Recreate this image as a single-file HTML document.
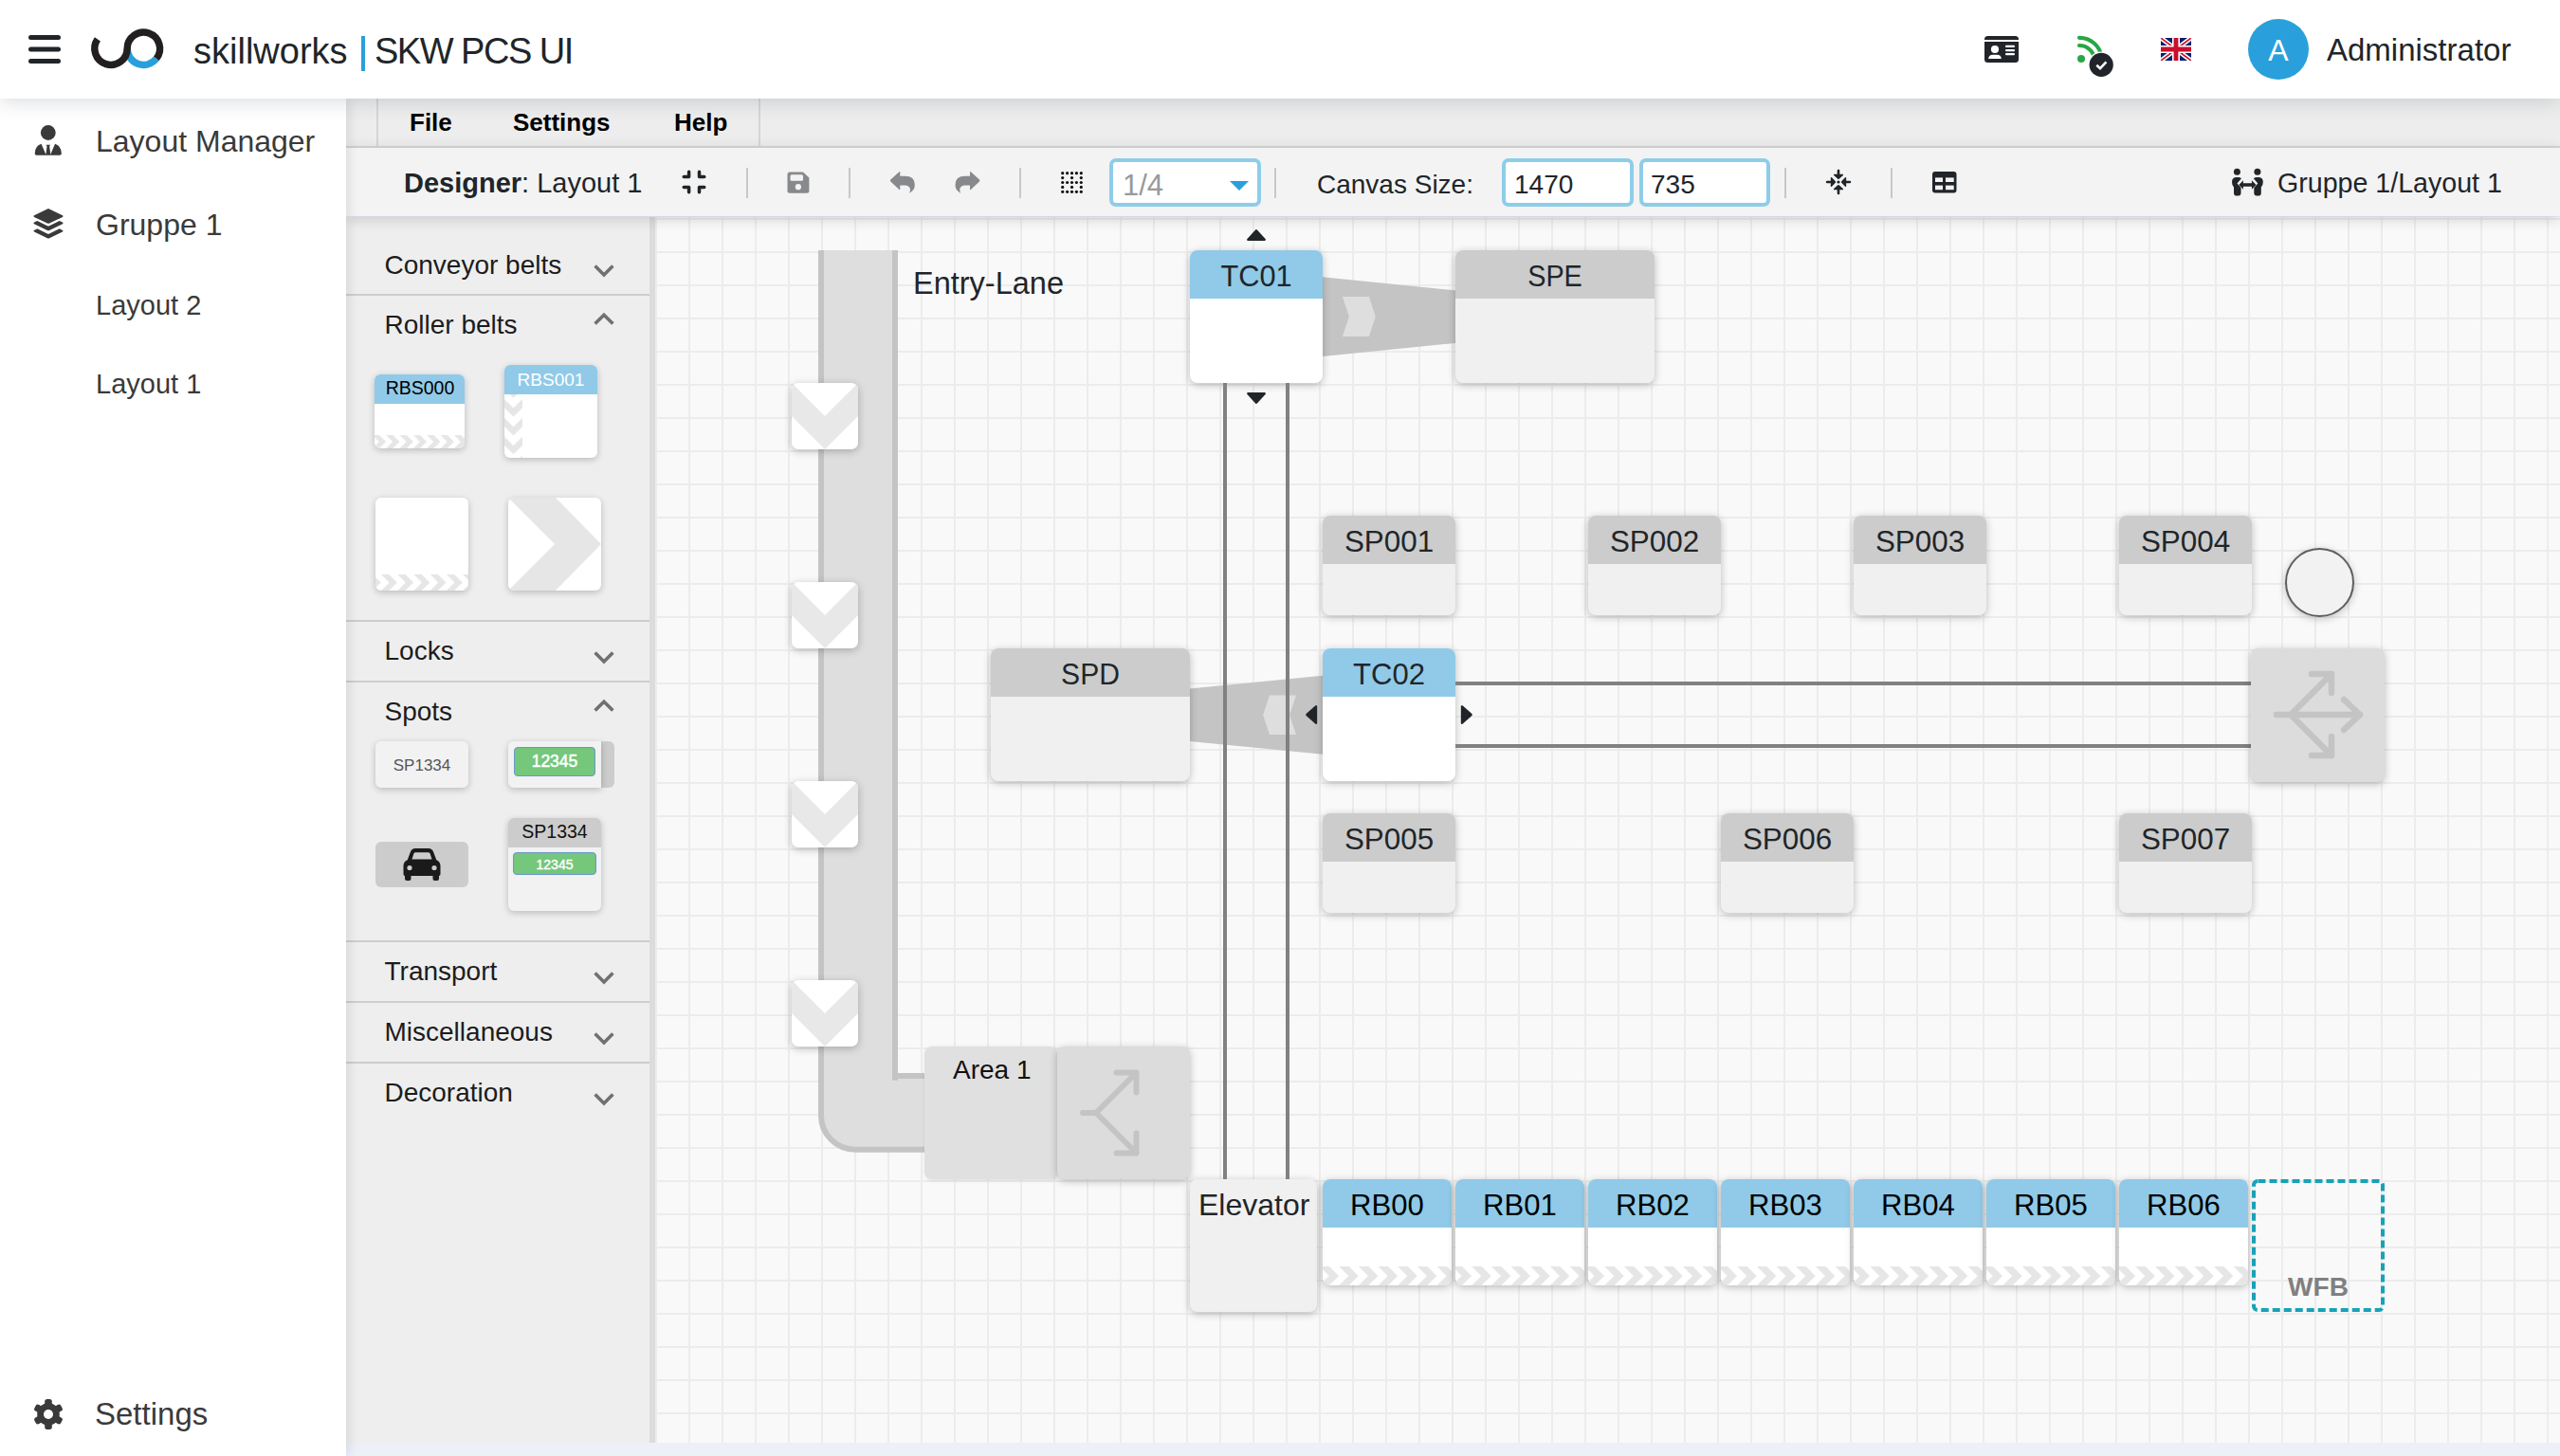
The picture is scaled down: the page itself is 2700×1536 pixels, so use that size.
<!DOCTYPE html>
<html><head><meta charset="utf-8">
<style>
*{margin:0;padding:0;box-sizing:border-box}
html,body{width:2700px;height:1536px;overflow:hidden;background:#edf0f8;font-family:"Liberation Sans",sans-serif;color:#212529}
.a{position:absolute}
.t{position:absolute;line-height:1;white-space:nowrap}
#header{left:0;top:0;width:2700px;height:104px;background:#fff;z-index:10;box-shadow:0 3px 20px rgba(30,40,60,0.17)}
#sidebar{left:0;top:104px;width:365px;height:1432px;background:#fff;z-index:9;box-shadow:2px 0 12px rgba(0,0,0,0.11)}
#menubar{left:365px;top:104px;width:2335px;height:52px;background:#ededed;border-bottom:2px solid #d6d6d6}
#toolbar{left:365px;top:156px;width:2335px;height:72px;background:#f3f3f3;z-index:5;box-shadow:0 3px 14px rgba(0,0,0,0.16)}
#palette{left:365px;top:229px;width:320px;height:1293px;background:#eeeeee}
#pborder{left:685px;top:229px;width:6px;height:1293px;background:#dcdcdc}
#canvas{left:691px;top:229px;width:2009px;height:1293px;background-color:#f9f9f9;
 background-image:linear-gradient(to right,#ececec 0,#ececec 2px,transparent 2px),linear-gradient(to bottom,#ececec 0,#ececec 2px,transparent 2px);
 background-size:35px 35px;background-position:0 1px;overflow:hidden}
.sep{position:absolute;width:2px;height:32px;background:#c8c8c8;top:177px}
.ph{position:absolute;left:405px;font-size:28px;color:#1c1c1c}
.psep{position:absolute;left:0;width:320px;height:2px;background:#cfcfcf}
.chev{position:absolute;left:261px;width:22px;height:14px}
</style></head>
<body>
<!-- HEADER -->
<div id="header" class="a">
  <svg class="a" style="left:30px;top:37px" width="34" height="30" viewBox="0 0 34 30">
    <rect x="0" y="0" width="34" height="5" rx="2.5" fill="#212529"/>
    <rect x="0" y="12.5" width="34" height="5" rx="2.5" fill="#212529"/>
    <rect x="0" y="25" width="34" height="5" rx="2.5" fill="#212529"/>
  </svg>
  <svg class="a" style="left:0;top:0" width="190" height="104" viewBox="0 0 190 104">
    <path d="M164.95 61.84 A17.2 17.2 0 0 1 134.2 51.25" fill="none" stroke="#29a0dc" stroke-width="7.4"/>
    <path d="M102.9 41.38 A17.2 17.2 0 1 0 134.2 51.25 A17.2 17.2 0 1 1 164.95 61.84" fill="none" stroke="#231f20" stroke-width="7.4"/>
  </svg>
  <div class="t" style="left:204px;top:35px;font-size:38px;color:#212529">skillworks</div><div class="a" style="left:381px;top:38px;width:3.6px;height:37px;background:#29a0dc"></div><div class="t" style="left:395px;top:35px;font-size:38px;letter-spacing:-1.5px;color:#212529">SKW PCS UI</div>
  <!-- id card -->
  <svg class="a" style="left:2093px;top:37px" width="37" height="30" viewBox="0 0 37 30">
    <path d="M3.5 1 H32.5 A3.5 3.5 0 0 1 36 4.5 V5 H0 V4.5 A3.5 3.5 0 0 1 3.5 1 Z" fill="#212529"/>
    <path d="M0 7 H36 V25.5 A3.5 3.5 0 0 1 32.5 29 H3.5 A3.5 3.5 0 0 1 0 25.5 Z" fill="#212529"/>
    <circle cx="11" cy="15" r="4.1" fill="#fff"/>
    <path d="M4.2 25 Q4.5 20.8 9 20.8 H13 Q17.5 20.8 17.8 25 Z" fill="#fff"/>
    <rect x="22" y="10.8" width="10" height="2.3" rx="1" fill="#fff"/>
    <rect x="22" y="14.9" width="10" height="2.3" rx="1" fill="#fff"/>
    <rect x="22" y="18.9" width="10" height="2.3" rx="1" fill="#fff"/>
  </svg>
  <!-- rss with check -->
  <svg class="a" style="left:2185px;top:34px" width="50" height="50" viewBox="0 0 50 50">
    <circle cx="10" cy="28" r="4" fill="#28a745"/>
    <path d="M8 14 A16 16 0 0 1 24 28" fill="none" stroke="#28a745" stroke-width="4.2" stroke-linecap="round"/>
    <path d="M8 5.8 A23.5 23.5 0 0 1 31.5 26" fill="none" stroke="#28a745" stroke-width="4.2" stroke-linecap="round"/>
    <circle cx="31.2" cy="34.4" r="14" fill="#fff"/>
    <circle cx="31.2" cy="34.4" r="12.6" fill="#212529"/>
    <path d="M26.3 34.8 L30 38.2 L36.4 31.4" fill="none" stroke="#fff" stroke-width="2.6"/>
  </svg>
  <!-- flag -->
  <svg class="a" style="left:2279px;top:40px" width="32" height="24" viewBox="0 0 60 45" preserveAspectRatio="none">
    <clipPath id="fc"><rect width="60" height="45"/></clipPath>
    <g clip-path="url(#fc)">
    <rect width="60" height="45" fill="#012169"/>
    <path d="M0 0 L60 45 M60 0 L0 45" stroke="#fff" stroke-width="9"/>
    <path d="M0 0 L30 22.5 M60 0 L30 22.5 M0 45 L30 22.5 M60 45 L30 22.5" stroke="#C8102E" stroke-width="3"/>
    <path d="M30 0 V45 M0 22.5 H60" stroke="#fff" stroke-width="15"/>
    <path d="M30 0 V45 M0 22.5 H60" stroke="#C8102E" stroke-width="9"/>
    </g>
  </svg>
  <div class="a" style="left:2371px;top:20px;width:64px;height:64px;border-radius:50%;background:#29a0db"></div>
  <div class="t" style="left:2371px;width:64px;text-align:center;top:37px;font-size:32px;color:#fff">A</div>
  <div class="t" style="left:2454px;top:36px;font-size:33px;color:#212529">Administrator</div>
</div>

<!-- SIDEBAR -->
<div id="sidebar" class="a">
  <svg class="a" style="left:36px;top:27px" width="30" height="34" viewBox="0 0 30 34">
    <circle cx="14.8" cy="9" r="7.9" fill="#3a3a3a"/>
    <path d="M7.5 20.7 Q0.7 23 0.7 31 Q0.7 32.8 2.5 32.8 H27 Q28.9 32.8 28.9 31 Q28.9 23 22 20.7 L17.3 32 L16.2 23.5 L17 21.8 H12.7 L13.5 23.5 L12.4 32 Z" fill="#3a3a3a"/>
  </svg>
  <svg class="a" style="left:34px;top:115px" width="34" height="34" viewBox="0 0 34 34">
    <path d="M17 1 L32 8.3 Q33.3 9 32 9.9 L18.1 16.5 Q17 17 15.9 16.5 L2 9.9 Q0.7 9 2 8.3 Z" fill="#3a3a3a"/>
    <path d="M5.3 14 L15.9 19.2 Q17 19.7 18.1 19.2 L28.7 14 L32 15.6 Q33.3 16.4 32 17.2 L18.1 23.9 Q17 24.4 15.9 23.9 L2 17.2 Q0.7 16.4 2 15.6 Z" fill="#3a3a3a"/>
    <path d="M5.3 22.3 L15.9 27.5 Q17 28 18.1 27.5 L28.7 22.3 L32 23.9 Q33.3 24.7 32 25.5 L18.1 32.2 Q17 32.7 15.9 32.2 L2 25.5 Q0.7 24.7 2 23.9 Z" fill="#3a3a3a"/>
  </svg>
  <div class="t" style="left:101px;top:29px;font-size:32px;color:#3a3a3a">Layout Manager</div>
  <div class="t" style="left:101px;top:117px;font-size:32px;color:#3a3a3a">Gruppe 1</div>
  <div class="t" style="left:101px;top:204px;font-size:29px;color:#3a3a3a">Layout 2</div>
  <div class="t" style="left:101px;top:287px;font-size:29px;color:#3a3a3a">Layout 1</div>
  <svg class="a" style="left:34px;top:1371px" width="34" height="34" viewBox="-17 -17 34 34">
    <g fill="#3a3a3a">
      <circle r="11.8"/>
      <rect x="-3.8" y="-16" width="7.6" height="32" rx="2.5"/>
      <rect x="-3.8" y="-16" width="7.6" height="32" rx="2.5" transform="rotate(60)"/>
      <rect x="-3.8" y="-16" width="7.6" height="32" rx="2.5" transform="rotate(120)"/>
    </g>
    <circle r="5" fill="#fff"/>
  </svg>
  <div class="t" style="left:100px;top:1371px;font-size:33px;color:#3a3a3a">Settings</div>
</div>

<!-- MENUBAR -->
<div id="menubar" class="a">
  <div class="a" style="left:32px;top:0;width:2px;height:52px;background:#d6d6d6"></div>
  <div class="a" style="left:435px;top:0;width:2px;height:52px;background:#d6d6d6"></div>
  <div class="t" style="left:67px;top:12px;font-size:26px;font-weight:bold;color:#000">File</div>
  <div class="t" style="left:176px;top:12px;font-size:26px;font-weight:bold;color:#000">Settings</div>
  <div class="t" style="left:346px;top:12px;font-size:26px;font-weight:bold;color:#000">Help</div>
</div>

<!-- TOOLBAR -->
<div id="toolbar" class="a"></div>
<div class="a" style="left:0;top:0;width:2700px;height:240px;z-index:6;pointer-events:none">
  <div class="t" style="left:426px;top:179px;font-size:29px;color:#212529"><b>Designer</b>: Layout 1</div>
  <!-- compress -->
  <svg class="a" style="left:718px;top:178px" width="28" height="28" viewBox="0 0 28 28">
    <path d="M3.25 8.6 H8.6 V3.25 M19.5 3.25 V8.6 H24.8 M3.25 19.5 H8.6 V24.8 M19.5 24.8 V19.5 H24.8" fill="none" stroke="#212529" stroke-width="3.5" stroke-linecap="round" stroke-linejoin="round"/>
  </svg>
  <div class="sep" style="left:787px"></div>
  <!-- save -->
  <svg class="a" style="left:830px;top:181px" width="24" height="23" viewBox="0 0 24 23">
    <path d="M0.5 3 A2.5 2.5 0 0 1 3 0.5 H17 L23.4 6.6 V20.2 A2.5 2.5 0 0 1 20.9 22.7 H3 A2.5 2.5 0 0 1 0.5 20.2 Z" fill="#87898c"/>
    <rect x="3.5" y="3.3" width="13.5" height="6.4" rx="1.5" fill="#f3f3f3"/>
    <circle cx="11.9" cy="16.2" r="3.1" fill="#f3f3f3"/>
  </svg>
  <div class="sep" style="left:895px"></div>
  <!-- undo -->
  <svg class="a" style="left:939px;top:180px" width="27" height="24" viewBox="0 0 27 24">
    <path d="M0.3 9.5 L9.4 1.2 Q10.2 0.5 10.3 1.6 V5.7 H15.5 Q25.8 5.7 25.8 15 Q25.8 20.5 20.6 23.5 Q19.9 23.8 20.3 23 Q22.3 18.5 19 16.5 Q17.7 15.6 15.2 15.6 H10.3 V19.6 Q10.2 20.7 9.4 20 L0.3 11.5 Q-0.4 10.5 0.3 9.5 Z" fill="#87898c"/>
  </svg>
  <svg class="a" style="left:1007px;top:180px" width="27" height="24" viewBox="0 0 27 24">
    <g transform="translate(26.3 0) scale(-1 1)">
    <path d="M0.3 9.5 L9.4 1.2 Q10.2 0.5 10.3 1.6 V5.7 H15.5 Q25.8 5.7 25.8 15 Q25.8 20.5 20.6 23.5 Q19.9 23.8 20.3 23 Q22.3 18.5 19 16.5 Q17.7 15.6 15.2 15.6 H10.3 V19.6 Q10.2 20.7 9.4 20 L0.3 11.5 Q-0.4 10.5 0.3 9.5 Z" fill="#87898c"/>
    </g>
  </svg>
  <div class="sep" style="left:1075px"></div>
  <!-- grid dots -->
  <svg class="a" style="left:1118px;top:180px" width="26" height="26" viewBox="0 0 26 26">
    <g fill="#111">
    <circle cx="2.7" cy="2.7" r="1.6"/><circle cx="7.6" cy="2.7" r="1.6"/><circle cx="12.5" cy="2.7" r="1.6"/><circle cx="17.4" cy="2.7" r="1.6"/><circle cx="22.3" cy="2.7" r="1.6"/>
    <circle cx="2.7" cy="7.6" r="1.6"/><circle cx="12.5" cy="7.6" r="1.6"/><circle cx="22.3" cy="7.6" r="1.6"/>
    <circle cx="2.7" cy="12.5" r="1.6"/><circle cx="7.6" cy="12.5" r="1.6"/><circle cx="12.5" cy="12.5" r="1.6"/><circle cx="17.4" cy="12.5" r="1.6"/><circle cx="22.3" cy="12.5" r="1.6"/>
    <circle cx="2.7" cy="17.4" r="1.6"/><circle cx="12.5" cy="17.4" r="1.6"/><circle cx="22.3" cy="17.4" r="1.6"/>
    <circle cx="2.7" cy="22.3" r="1.6"/><circle cx="7.6" cy="22.3" r="1.6"/><circle cx="12.5" cy="22.3" r="1.6"/><circle cx="17.4" cy="22.3" r="1.6"/><circle cx="22.3" cy="22.3" r="1.6"/>
    </g>
  </svg>
  <!-- select -->
  <div class="a" style="left:1170px;top:167px;width:160px;height:51px;border:4px solid #8ecdea;border-radius:7px;background:#fff"></div>
  <div class="t" style="left:1184px;top:179.8px;font-size:31px;color:#999">1/4</div>
  <svg class="a" style="left:1297px;top:191px" width="20" height="11" viewBox="0 0 20 11"><path d="M0 0 H20 L10 10 Z" fill="#29a0db"/></svg>
  <div class="sep" style="left:1344px"></div>
  <div class="t" style="left:1389px;top:181px;font-size:28px;color:#212529">Canvas Size:</div>
  <div class="a" style="left:1584px;top:167px;width:139px;height:51px;border:4px solid #8ecdea;border-radius:7px;background:#fff"></div>
  <div class="t" style="left:1597px;top:181px;font-size:28px;color:#212529">1470</div>
  <div class="a" style="left:1729px;top:167px;width:138px;height:51px;border:4px solid #8ecdea;border-radius:7px;background:#fff"></div>
  <div class="t" style="left:1741px;top:181px;font-size:28px;color:#212529">735</div>
  <div class="sep" style="left:1882px"></div>
  <!-- compress arrows -->
  <svg class="a" style="left:1925px;top:178px" width="28" height="28" viewBox="-14 -14 28 28">
    <g fill="#212529">
      <circle r="1.6"/>
      <g id="ca"><rect x="-1.3" y="-13.2" width="2.6" height="6" rx="1.2"/><path d="M-4.8 -8.2 Q-5.4 -7.6 -4.8 -7 L-0.7 -3.2 Q0 -2.6 0.7 -3.2 L4.8 -7 Q5.4 -7.6 4.8 -8.2 Z"/></g>
      <use href="#ca" transform="rotate(90)"/><use href="#ca" transform="rotate(180)"/><use href="#ca" transform="rotate(270)"/>
    </g>
  </svg>
  <div class="sep" style="left:1994px"></div>
  <!-- table -->
  <svg class="a" style="left:2038px;top:181px" width="26" height="23" viewBox="0 0 26 23">
    <rect x="0" y="0" width="25.5" height="22.5" rx="3" fill="#212529"/>
    <rect x="3" y="6.4" width="8" height="4.6" fill="#f3f3f3"/>
    <rect x="14" y="6.4" width="8.7" height="4.6" fill="#f3f3f3"/>
    <rect x="3" y="14.6" width="8" height="4.6" fill="#f3f3f3"/>
    <rect x="14" y="14.6" width="8.7" height="4.6" fill="#f3f3f3"/>
  </svg>
  <!-- people arrows -->
  <svg class="a" style="left:2353px;top:177px" width="35" height="31" viewBox="0 0 35 31">
    <g fill="#212529">
    <circle cx="6.4" cy="4.3" r="3.5"/><circle cx="27.9" cy="4.3" r="3.5"/>
    <path d="M1 15 Q1 10 6 10 H7.5 Q9.5 10 11 11.3 L6.5 16.5 L10.5 21 V26.7 Q10.5 29.6 6.5 29.6 Q3 29.6 3 26.7 V20.5 Q1 19 1 15 Z"/>
    <path d="M33.8 15 Q33.8 10 28.8 10 H27.3 Q25.3 10 23.8 11.3 L28.3 16.5 L24.3 21 V26.7 Q24.3 29.6 28.3 29.6 Q31.8 29.6 31.8 26.7 V20.5 Q33.8 19 33.8 15 Z"/>
    <path d="M8.3 18 L12.9 13.3 V16.2 H21.9 V13.3 L26.5 18 L21.9 22.7 V19.8 H12.9 V22.7 Z"/>
    </g>
  </svg>
  <div class="t" style="left:2402px;top:178.5px;font-size:28.6px;color:#212529">Gruppe 1/Layout 1</div>
</div>

<div id="palette" class="a"></div>
<div id="pborder" class="a"></div>
<div class="a" style="left:0;top:0;width:691px;height:1536px;z-index:3">
<div class="t" style="left:405.5px;top:265.6px;font-size:28px;color:#1c1c1c;">Conveyor belts</div>
<div class="t" style="left:405.5px;top:329.3px;font-size:28px;color:#1c1c1c;">Roller belts</div>
<div class="t" style="left:405.5px;top:673.3px;font-size:28px;color:#1c1c1c;">Locks</div>
<div class="t" style="left:405.5px;top:737.3px;font-size:28px;color:#1c1c1c;">Spots</div>
<div class="t" style="left:405.5px;top:1011.3px;font-size:28px;color:#1c1c1c;">Transport</div>
<div class="t" style="left:405.5px;top:1075.3px;font-size:28px;color:#1c1c1c;">Miscellaneous</div>
<div class="t" style="left:405.5px;top:1139.3px;font-size:28px;color:#1c1c1c;">Decoration</div>
<div class="a" style="left:365px;top:310px;width:320px;height:2px;background:#cdcdcd"></div>
<div class="a" style="left:365px;top:654px;width:320px;height:2px;background:#cdcdcd"></div>
<div class="a" style="left:365px;top:718px;width:320px;height:2px;background:#cdcdcd"></div>
<div class="a" style="left:365px;top:992px;width:320px;height:2px;background:#cdcdcd"></div>
<div class="a" style="left:365px;top:1056px;width:320px;height:2px;background:#cdcdcd"></div>
<div class="a" style="left:365px;top:1120px;width:320px;height:2px;background:#cdcdcd"></div>
<svg class="a" style="left:626px;top:279px" width="22" height="15" viewBox="0 0 22 15"><path d="M1.6 1.6 L11 11 L20.4 1.6" fill="none" stroke="#707070" stroke-width="3.6"/></svg>
<svg class="a" style="left:626px;top:687px" width="22" height="15" viewBox="0 0 22 15"><path d="M1.6 1.6 L11 11 L20.4 1.6" fill="none" stroke="#707070" stroke-width="3.6"/></svg>
<svg class="a" style="left:626px;top:1025px" width="22" height="15" viewBox="0 0 22 15"><path d="M1.6 1.6 L11 11 L20.4 1.6" fill="none" stroke="#707070" stroke-width="3.6"/></svg>
<svg class="a" style="left:626px;top:1089px" width="22" height="15" viewBox="0 0 22 15"><path d="M1.6 1.6 L11 11 L20.4 1.6" fill="none" stroke="#707070" stroke-width="3.6"/></svg>
<svg class="a" style="left:626px;top:1153px" width="22" height="15" viewBox="0 0 22 15"><path d="M1.6 1.6 L11 11 L20.4 1.6" fill="none" stroke="#707070" stroke-width="3.6"/></svg>
<svg class="a" style="left:626px;top:328.5px" width="22" height="15" viewBox="0 0 22 15"><path d="M1.6 12.6 L11 3.2 L20.4 12.6" fill="none" stroke="#707070" stroke-width="3.6"/></svg>
<svg class="a" style="left:626px;top:736.5px" width="22" height="15" viewBox="0 0 22 15"><path d="M1.6 12.6 L11 3.2 L20.4 12.6" fill="none" stroke="#707070" stroke-width="3.6"/></svg>
<div class="a" style="left:395px;top:395px;width:95px;height:78px;border-radius:6px;background:#fff;overflow:hidden;box-shadow:0 2px 7px rgba(0,0,0,0.22);"><div class="a" style="left:0;top:0;width:95px;height:31px;background:#90cae8"></div><svg class="a" style="left:0;top:64px" width="95" height="14"><rect width="95" height="14" fill="url(#pchev14)"/></svg></div>
<div class="t" style="left:243px;width:400px;text-align:center;top:400.3px;font-size:19.5px;color:#000;">RBS000</div>
<div class="a" style="left:532px;top:385px;width:98px;height:98px;border-radius:6px;background:#fff;overflow:hidden;box-shadow:0 2px 7px rgba(0,0,0,0.22);"><div class="a" style="left:0;top:0;width:98px;height:31px;background:#90cae8"></div><svg class="a" style="left:0;top:31px" width="19" height="67"><rect width="19" height="67" fill="url(#pchevV)"/></svg></div>
<div class="t" style="left:381px;width:400px;text-align:center;top:390.8px;font-size:19px;color:#fff;">RBS001</div>
<div class="a" style="left:396px;top:525px;width:98px;height:98px;border-radius:6px;background:#fff;overflow:hidden;box-shadow:0 2px 7px rgba(0,0,0,0.22);"><svg class="a" style="left:0;top:81px" width="98" height="17"><rect width="98" height="17" fill="url(#pchev17)"/></svg></div>
<div class="a" style="left:536px;top:525px;width:98px;height:98px;border-radius:6px;background:#fff;overflow:hidden;box-shadow:0 2px 7px rgba(0,0,0,0.22);"><svg class="a" style="left:0;top:0" width="98" height="98"><path d="M0 0 H50 L98 49 L50 98 H0 L49 49 Z" fill="#e6e6e6"/></svg></div>
<div class="a" style="left:396px;top:782px;width:98px;height:49px;border-radius:6px;background:#f2f2f2;box-shadow:0 2px 7px rgba(0,0,0,0.22);"></div>
<div class="t" style="left:245px;width:400px;text-align:center;top:798.5px;font-size:17px;color:#555;">SP1334</div>
<div class="a" style="left:620px;top:782px;width:28px;height:49px;border-radius:6px;background:#cccccc"></div>
<div class="a" style="left:536px;top:782px;width:98px;height:49px;border-radius:6px 0 0 6px;background:#f2f2f2;box-shadow:0 2px 7px rgba(0,0,0,0.22);"></div>
<div class="a" style="left:542px;top:788px;width:86px;height:31px;border-radius:4px;background:#74c77b;border:1px solid #6b96cc"></div>
<div class="t" style="left:385px;width:400px;text-align:center;top:794.7px;font-size:17.5px;color:#fff;-webkit-text-stroke:0.5px #fff;">12345</div>
<div class="a" style="left:396px;top:888px;width:98px;height:48px;border-radius:6px;background:#cccccc"></div>
<svg class="a" style="left:424px;top:894px" width="42" height="36" viewBox="0 0 42 36"><path d="M9 4.5 Q10.3 1 14 1 H28 Q31.7 1 33 4.5 L36.3 13.3 Q40.5 15 40.5 19.5 V28 Q40.5 29.8 39 30 V33 Q39 35 37 35 H34.5 Q32.5 35 32.5 33 V30 H9.5 V33 Q9.5 35 7.5 35 H5 Q3 35 3 33 V30 Q1.5 29.8 1.5 28 V19.5 Q1.5 15 5.7 13.3 Z M12.5 6.3 L10.5 12.6 H31.5 L29.5 6.3 Q29 5.2 27.8 5.2 H14.2 Q13 5.2 12.5 6.3 Z" fill="#1a1a1a"/><circle cx="8" cy="21.5" r="2.6" fill="#cccccc"/><circle cx="34" cy="21.5" r="2.6" fill="#cccccc"/></svg>
<div class="a" style="left:536px;top:863px;width:98px;height:98px;border-radius:6px;background:#f2f2f2;overflow:hidden;box-shadow:0 2px 7px rgba(0,0,0,0.22);"><div class="a" style="left:0;top:0;width:98px;height:31px;background:#cccccc"></div></div>
<div class="t" style="left:385px;width:400px;text-align:center;top:868.1px;font-size:19.5px;color:#111;">SP1334</div>
<div class="a" style="left:541px;top:899px;width:88px;height:24px;border-radius:4px;background:#74c77b;border:1px solid #6b96cc"></div>
<div class="t" style="left:385px;width:400px;text-align:center;top:904.6px;font-size:14px;color:#fff;-webkit-text-stroke:0.4px #fff;">12345</div>
</div>
<div id="canvas" class="a"></div>
<div class="a" style="left:0;top:0;width:2700px;height:1522px;z-index:2;overflow:hidden">
<svg class="a" width="0" height="0" style="left:0;top:0"><defs>
<pattern id="pchev20" patternUnits="userSpaceOnUse" width="20.67" height="20" x="-3.45" y="0"><path d="M0 0 H10.5 L20.5 10 L10.5 20 H0 L10 10 Z" fill="#e6e6e6"/></pattern>
<pattern id="pchev14" patternUnits="userSpaceOnUse" width="14.35" height="14" x="-2.2" y="0"><path d="M0 0 H7.3 L14.3 7 L7.3 14 H0 L7 7 Z" fill="#e6e6e6"/></pattern>
<pattern id="pchev17" patternUnits="userSpaceOnUse" width="17.2" height="17" x="6.1" y="0"><path d="M0 0 H8.3 L16.8 8.5 L8.3 17 H0 L8.5 8.5 Z" fill="#e6e6e6"/></pattern>
<pattern id="pchevV" patternUnits="userSpaceOnUse" width="19" height="19.8" x="0" y="5"><path d="M0 0 L9.5 9.3 L19 0 V9.3 L9.5 18.6 L0 9.3 Z" fill="#e6e6e6"/></pattern>
</defs></svg>
<svg class="a" style="left:0;top:0" width="2700" height="1522"><path d="M866 264 V1176.7 A36 36 0 0 0 902 1212.7 H975 V1135 H944 V264 Z" fill="#dedede"/><path d="M866 264 V1176.7 A36 36 0 0 0 902 1212.7 H975" fill="none" stroke="#c4c4c4" stroke-width="6"/><path d="M944 264 V1139.7" fill="none" stroke="#c4c4c4" stroke-width="6"/><path d="M941 1135 H975" fill="none" stroke="#c4c4c4" stroke-width="6"/></svg>
<div class="a" style="left:835px;top:404px;width:70px;height:70px;border-radius:7px;background:#fff;overflow:hidden;box-shadow:0 2px 9px rgba(0,0,0,0.25);"><svg class="a" style="left:0;top:0" width="70" height="70"><path d="M0 0 L35 35 L70 0 V35 L35 70 L0 35 Z" fill="#e8e8e8"/></svg></div>
<div class="a" style="left:835px;top:614px;width:70px;height:70px;border-radius:7px;background:#fff;overflow:hidden;box-shadow:0 2px 9px rgba(0,0,0,0.25);"><svg class="a" style="left:0;top:0" width="70" height="70"><path d="M0 0 L35 35 L70 0 V35 L35 70 L0 35 Z" fill="#e8e8e8"/></svg></div>
<div class="a" style="left:835px;top:824px;width:70px;height:70px;border-radius:7px;background:#fff;overflow:hidden;box-shadow:0 2px 9px rgba(0,0,0,0.25);"><svg class="a" style="left:0;top:0" width="70" height="70"><path d="M0 0 L35 35 L70 0 V35 L35 70 L0 35 Z" fill="#e8e8e8"/></svg></div>
<div class="a" style="left:835px;top:1034px;width:70px;height:70px;border-radius:7px;background:#fff;overflow:hidden;box-shadow:0 2px 9px rgba(0,0,0,0.25);"><svg class="a" style="left:0;top:0" width="70" height="70"><path d="M0 0 L35 35 L70 0 V35 L35 70 L0 35 Z" fill="#e8e8e8"/></svg></div>
<div class="t" style="left:963px;top:282.5px;font-size:32.5px;color:#212529;">Entry-Lane</div>
<svg class="a" style="left:0;top:0" width="2700" height="1522"><path d="M1395 292.2 L1535 306.3 V361.9 L1395 376 Z" fill="#c4c4c4"/><path d="M1415.9 313 H1443.9 L1450.8 334.1 L1443.9 355 H1415.9 L1422.8 334.1 Z" fill="#dedede"/><path d="M1255 726.4 L1395 712.7 V795.8 L1255 782 Z" fill="#c4c4c4"/><path d="M1367 733.4 H1339 L1332.1 754.2 L1339 775 H1367 L1360.1 754.2 Z" fill="#dedede"/></svg>
<div class="a" style="left:1255px;top:264px;width:140px;height:140px;border-radius:8px;background:#fff;overflow:hidden;box-shadow:0 2px 9px rgba(0,0,0,0.25);"><div class="a" style="left:0;top:0;width:140px;height:51px;background:#90cae8"></div></div>
<div class="t" style="left:1125.0px;width:400px;text-align:center;top:274.9px;font-size:32px;color:#212529;transform:scaleX(0.96);">TC01</div>
<div class="a" style="left:1535px;top:264px;width:210px;height:140px;border-radius:8px;background:#f0f0f0;overflow:hidden;box-shadow:0 2px 9px rgba(0,0,0,0.25);"><div class="a" style="left:0;top:0;width:210px;height:51px;background:#cccccc"></div></div>
<div class="t" style="left:1440.0px;width:400px;text-align:center;top:274.9px;font-size:32px;color:#212529;transform:scaleX(0.9);">SPE</div>
<svg class="a" style="left:0;top:0" width="2700" height="1522"><g fill="#212529" stroke="#212529" stroke-width="2.4" stroke-linejoin="round"><path d="M1316.3 252.8 H1333.7 L1325 243.2 Z"/><path d="M1316.3 415.2 H1333.7 L1325 424.8 Z"/><path d="M1388 745.3 V762.7 L1378.4 754 Z"/><path d="M1542 745.3 V762.7 L1551.6 754 Z"/></g></svg>
<div class="a" style="left:1290px;top:404px;width:4px;height:840px;background:#818181;z-index:1"></div>
<div class="a" style="left:1356px;top:404px;width:4px;height:840px;background:#818181;z-index:1"></div>
<div class="a" style="left:1395px;top:544px;width:140px;height:105px;border-radius:8px;background:#f0f0f0;overflow:hidden;box-shadow:0 2px 9px rgba(0,0,0,0.25);"><div class="a" style="left:0;top:0;width:140px;height:51px;background:#cccccc"></div></div>
<div class="t" style="left:1265.0px;width:400px;text-align:center;top:554.9px;font-size:32px;color:#212529;transform:scaleX(0.98);">SP001</div>
<div class="a" style="left:1675px;top:544px;width:140px;height:105px;border-radius:8px;background:#f0f0f0;overflow:hidden;box-shadow:0 2px 9px rgba(0,0,0,0.25);"><div class="a" style="left:0;top:0;width:140px;height:51px;background:#cccccc"></div></div>
<div class="t" style="left:1545.0px;width:400px;text-align:center;top:554.9px;font-size:32px;color:#212529;transform:scaleX(0.98);">SP002</div>
<div class="a" style="left:1955px;top:544px;width:140px;height:105px;border-radius:8px;background:#f0f0f0;overflow:hidden;box-shadow:0 2px 9px rgba(0,0,0,0.25);"><div class="a" style="left:0;top:0;width:140px;height:51px;background:#cccccc"></div></div>
<div class="t" style="left:1825.0px;width:400px;text-align:center;top:554.9px;font-size:32px;color:#212529;transform:scaleX(0.98);">SP003</div>
<div class="a" style="left:2235px;top:544px;width:140px;height:105px;border-radius:8px;background:#f0f0f0;overflow:hidden;box-shadow:0 2px 9px rgba(0,0,0,0.25);"><div class="a" style="left:0;top:0;width:140px;height:51px;background:#cccccc"></div></div>
<div class="t" style="left:2105.0px;width:400px;text-align:center;top:554.9px;font-size:32px;color:#212529;transform:scaleX(0.98);">SP004</div>
<div class="a" style="left:2409.5px;top:578px;width:73px;height:73px;border-radius:50%;background:#f2f2f2;border:2px solid #5f5f5f;box-shadow:0 2px 8px rgba(0,0,0,0.22)"></div>
<div class="a" style="left:1045px;top:684px;width:210px;height:140px;border-radius:8px;background:#f0f0f0;overflow:hidden;box-shadow:0 2px 9px rgba(0,0,0,0.25);"><div class="a" style="left:0;top:0;width:210px;height:51px;background:#cccccc"></div></div>
<div class="t" style="left:950.0px;width:400px;text-align:center;top:694.9px;font-size:32px;color:#212529;transform:scaleX(0.94);">SPD</div>
<div class="a" style="left:1395px;top:684px;width:140px;height:140px;border-radius:8px;background:#fff;overflow:hidden;box-shadow:0 2px 9px rgba(0,0,0,0.25);"><div class="a" style="left:0;top:0;width:140px;height:51px;background:#90cae8"></div></div>
<div class="t" style="left:1265.0px;width:400px;text-align:center;top:694.9px;font-size:32px;color:#212529;transform:scaleX(0.97);">TC02</div>
<div class="a" style="left:1535px;top:719px;width:840px;height:4px;background:#818181"></div>
<div class="a" style="left:1535px;top:785px;width:840px;height:4px;background:#818181"></div>
<div class="a" style="left:2374px;top:684px;width:141px;height:141px;border-radius:8px;background:#dcdcdc;box-shadow:0 2px 9px rgba(0,0,0,0.25);"></div>
<svg class="a" style="left:2374px;top:684px" width="141" height="141" viewBox="2374 684 141 141"><g fill="none" stroke="#c4c4c4" stroke-width="6.5" stroke-linecap="round" stroke-linejoin="round"><path d="M2401 754 H2489 M2472 738 L2489 754 L2472 770"/><path d="M2416 754 L2459 711 M2438 711 H2459 V731"/><path d="M2416 754 L2459 797 M2438 797 H2459 V777"/></g></svg>
<div class="a" style="left:1395px;top:858px;width:140px;height:105px;border-radius:8px;background:#f0f0f0;overflow:hidden;box-shadow:0 2px 9px rgba(0,0,0,0.25);"><div class="a" style="left:0;top:0;width:140px;height:51px;background:#cccccc"></div></div>
<div class="t" style="left:1265.0px;width:400px;text-align:center;top:868.9px;font-size:32px;color:#212529;transform:scaleX(0.98);">SP005</div>
<div class="a" style="left:1815px;top:858px;width:140px;height:105px;border-radius:8px;background:#f0f0f0;overflow:hidden;box-shadow:0 2px 9px rgba(0,0,0,0.25);"><div class="a" style="left:0;top:0;width:140px;height:51px;background:#cccccc"></div></div>
<div class="t" style="left:1685.0px;width:400px;text-align:center;top:868.9px;font-size:32px;color:#212529;transform:scaleX(0.98);">SP006</div>
<div class="a" style="left:2235px;top:858px;width:140px;height:105px;border-radius:8px;background:#f0f0f0;overflow:hidden;box-shadow:0 2px 9px rgba(0,0,0,0.25);"><div class="a" style="left:0;top:0;width:140px;height:51px;background:#cccccc"></div></div>
<div class="t" style="left:2105.0px;width:400px;text-align:center;top:868.9px;font-size:32px;color:#212529;transform:scaleX(0.98);">SP007</div>
<div class="a" style="left:975px;top:1104px;width:140px;height:140px;border-radius:8px;background:#e0e0e0;box-shadow:1px 1px 4px rgba(0,0,0,0.12)"></div>
<div class="t" style="left:1005px;top:1115.0px;font-size:28px;color:#111;">Area 1</div>
<div class="a" style="left:1115px;top:1104px;width:140px;height:140px;border-radius:8px;background:#dcdcdc;box-shadow:0 2px 9px rgba(0,0,0,0.25);"></div>
<svg class="a" style="left:1115px;top:1104px" width="140" height="140" viewBox="1115 1104 140 140"><g fill="none" stroke="#c4c4c4" stroke-width="6" stroke-linecap="round" stroke-linejoin="round"><path d="M1142 1174 H1156 L1198.5 1131.5 M1177.5 1131.5 H1198.5 V1152.5"/><path d="M1156 1174 L1198.5 1216.5 M1177.5 1216.5 H1198.5 V1195.5"/></g></svg>
<div class="a" style="left:1255px;top:1244px;width:134px;height:140px;border-radius:8px;background:#f0f0f0;box-shadow:0 2px 9px rgba(0,0,0,0.25);"></div>
<div class="t" style="left:1264px;top:1254.5px;font-size:32px;color:#212529;">Elevator</div>
<div class="a" style="left:1395px;top:1244px;width:136px;height:112px;border-radius:8px;background:#fff;overflow:hidden;box-shadow:0 2px 9px rgba(0,0,0,0.25);"><div class="a" style="left:0;top:0;width:136px;height:51px;background:#90cae8"></div><svg class="a" style="left:0;top:92px" width="136" height="20"><rect width="136" height="20" fill="url(#pchev20)"/></svg></div>
<div class="t" style="left:1263.0px;width:400px;text-align:center;top:1254.9px;font-size:32px;color:#000;transform:scaleX(0.972);">RB00</div>
<div class="a" style="left:1535px;top:1244px;width:136px;height:112px;border-radius:8px;background:#fff;overflow:hidden;box-shadow:0 2px 9px rgba(0,0,0,0.25);"><div class="a" style="left:0;top:0;width:136px;height:51px;background:#90cae8"></div><svg class="a" style="left:0;top:92px" width="136" height="20"><rect width="136" height="20" fill="url(#pchev20)"/></svg></div>
<div class="t" style="left:1403.0px;width:400px;text-align:center;top:1254.9px;font-size:32px;color:#000;transform:scaleX(0.972);">RB01</div>
<div class="a" style="left:1675px;top:1244px;width:136px;height:112px;border-radius:8px;background:#fff;overflow:hidden;box-shadow:0 2px 9px rgba(0,0,0,0.25);"><div class="a" style="left:0;top:0;width:136px;height:51px;background:#90cae8"></div><svg class="a" style="left:0;top:92px" width="136" height="20"><rect width="136" height="20" fill="url(#pchev20)"/></svg></div>
<div class="t" style="left:1543.0px;width:400px;text-align:center;top:1254.9px;font-size:32px;color:#000;transform:scaleX(0.972);">RB02</div>
<div class="a" style="left:1815px;top:1244px;width:136px;height:112px;border-radius:8px;background:#fff;overflow:hidden;box-shadow:0 2px 9px rgba(0,0,0,0.25);"><div class="a" style="left:0;top:0;width:136px;height:51px;background:#90cae8"></div><svg class="a" style="left:0;top:92px" width="136" height="20"><rect width="136" height="20" fill="url(#pchev20)"/></svg></div>
<div class="t" style="left:1683.0px;width:400px;text-align:center;top:1254.9px;font-size:32px;color:#000;transform:scaleX(0.972);">RB03</div>
<div class="a" style="left:1955px;top:1244px;width:136px;height:112px;border-radius:8px;background:#fff;overflow:hidden;box-shadow:0 2px 9px rgba(0,0,0,0.25);"><div class="a" style="left:0;top:0;width:136px;height:51px;background:#90cae8"></div><svg class="a" style="left:0;top:92px" width="136" height="20"><rect width="136" height="20" fill="url(#pchev20)"/></svg></div>
<div class="t" style="left:1823.0px;width:400px;text-align:center;top:1254.9px;font-size:32px;color:#000;transform:scaleX(0.972);">RB04</div>
<div class="a" style="left:2095px;top:1244px;width:136px;height:112px;border-radius:8px;background:#fff;overflow:hidden;box-shadow:0 2px 9px rgba(0,0,0,0.25);"><div class="a" style="left:0;top:0;width:136px;height:51px;background:#90cae8"></div><svg class="a" style="left:0;top:92px" width="136" height="20"><rect width="136" height="20" fill="url(#pchev20)"/></svg></div>
<div class="t" style="left:1963.0px;width:400px;text-align:center;top:1254.9px;font-size:32px;color:#000;transform:scaleX(0.972);">RB05</div>
<div class="a" style="left:2235px;top:1244px;width:136px;height:112px;border-radius:8px;background:#fff;overflow:hidden;box-shadow:0 2px 9px rgba(0,0,0,0.25);"><div class="a" style="left:0;top:0;width:136px;height:51px;background:#90cae8"></div><svg class="a" style="left:0;top:92px" width="136" height="20"><rect width="136" height="20" fill="url(#pchev20)"/></svg></div>
<div class="t" style="left:2103.0px;width:400px;text-align:center;top:1254.9px;font-size:32px;color:#000;transform:scaleX(0.972);">RB06</div>
<svg class="a" style="left:2373px;top:1242px" width="144" height="144"><rect x="4" y="4" width="136" height="136" rx="4" fill="none" stroke="#17a2b8" stroke-width="4" stroke-dasharray="8 4" stroke-dashoffset="-0.5"/></svg>
<div class="t" style="left:2245px;width:400px;text-align:center;top:1344.1px;font-size:28px;color:#808080;font-weight:bold;">WFB</div>
</div>
</body></html>
